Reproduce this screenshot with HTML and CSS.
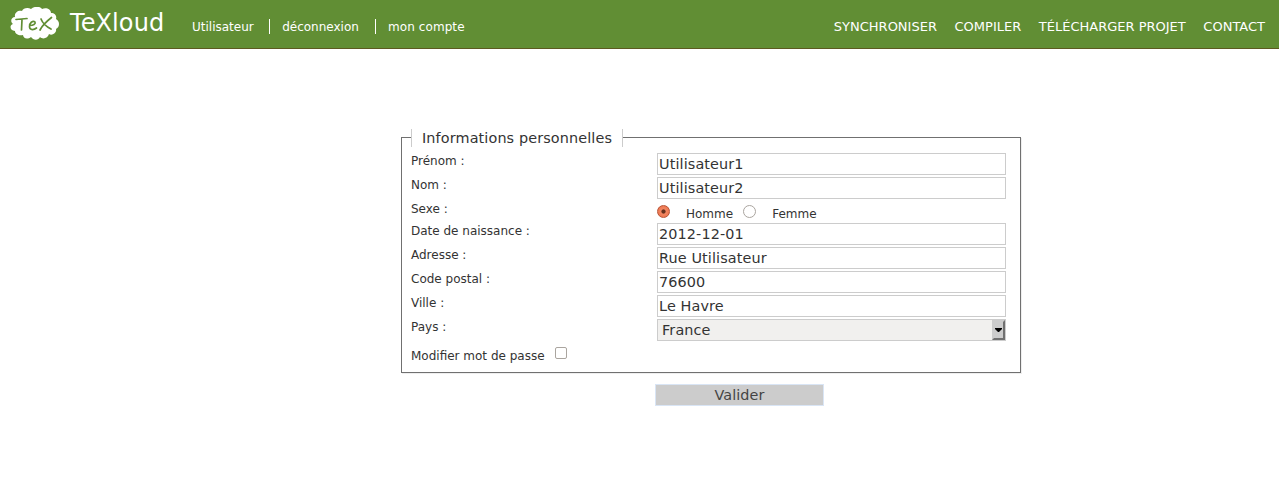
FILE: index.html
```html
<!DOCTYPE html>
<html lang="fr">
<head>
<meta charset="utf-8">
<title>TeXloud</title>
<link rel="stylesheet" href="styles.css">
</head>
<body>
<header class="topbar">
  <svg class="logo" width="50" height="34" viewBox="0 0 50 34">
    <path fill="#fff" d="M5 10C4 6 8 3 12 4C13 1 18 0 21 2C24-1 30-1 32 2C36 0 41 2 41 6C45 6 47 9 46 12C50 14 50 20 46 22C47 26 42 29 39 27C38 31 33 33 30 30C28 34 23 33 21 30C17 33 13 31 13 28C9 29 5 27 5 24C0 24-1 18 3 17C0 15 1 10 5 10Z"/>
    <path fill="none" stroke="#618e34" stroke-width="1.7" stroke-linecap="round" d="M6 12.500L17 11.500M12 12.500L11.500 23M20 18.500C23 18.500 26 17 25 15C23 13 19 16 19.500 20C20 23.500 24 23 26.500 21M31 12C33 17 37 20 41 22M41.500 10.500C37 14 32 19 30 23"/>
  </svg>
  <h1 class="brand">TeXloud</h1>
  <nav class="session">
    <a class="session-item">Utilisateur</a>
    <a class="session-item">déconnexion</a>
    <a class="session-item">mon compte</a>
  </nav>
  <nav class="menu">
    <a>SYNCHRONISER</a><a>COMPILER</a><a>TÉLÉCHARGER PROJET</a><a>CONTACT</a>
  </nav>
</header>
<form class="profile">
  <fieldset class="panel">
    <legend class="panel-title">Informations personnelles</legend>
    <div class="row"><label>Prénom :</label><input class="field" type="text" value="Utilisateur1"></div>
    <div class="row"><label>Nom :</label><input class="field" type="text" value="Utilisateur2"></div>
    <div class="row row-radio"><label>Sexe :</label>
      <div class="choices"><input class="radio" type="radio" name="sexe" checked><span class="choice">Homme</span><input class="radio" type="radio" name="sexe"><span class="choice">Femme</span></div>
    </div>
    <div class="row"><label>Date de naissance :</label><input class="field" type="text" value="2012-12-01"></div>
    <div class="row"><label>Adresse :</label><input class="field" type="text" value="Rue Utilisateur"></div>
    <div class="row"><label>Code postal :</label><input class="field" type="text" value="76600"></div>
    <div class="row"><label>Ville :</label><input class="field" type="text" value="Le Havre"></div>
    <div class="row"><label>Pays :</label>
      <div class="select"><span>France</span><span class="arrow"><svg width="7" height="4" viewBox="0 0 7 4"><path d="M0 0H7V1L4 4H3L0 1Z"/></svg></span></div>
    </div>
    <div class="password"><label>Modifier mot de passe</label><input class="check" type="checkbox"></div>
  </fieldset>
  <button class="submit" type="button">Valider</button>
</form>
</body>
</html>
```

FILE: styles.css
```css
* { box-sizing: border-box; }
body {
  margin: 0;
  background: #fff;
  color: #333;
  font: 12px/16px "DejaVu Sans", sans-serif;
}
.topbar {
  display: flex;
  height: 49px;
  padding: 0 14px 0 10px;
  background: #618e34;
  border-bottom: 1px solid #5d5a20;
  color: #fff;
}
.logo { margin-top: 7px; }
.brand {
  width: 94px;
  margin: 8px 0 0 10px;
  font-size: 24px;
  line-height: 30px;
  letter-spacing: 0.1px;
  font-weight: normal;
  white-space: nowrap;
}
.session { display: flex; margin: 19px 0 0 28px; height: 15px; }
.session-item { line-height: 16px; white-space: nowrap; }
.session-item + .session-item {
  margin-left: 15.4px;
  padding-left: 12px;
  border-left: 1px solid #fff;
}
.session-item:last-child { margin-left: 16.2px !important; letter-spacing: 0.08px; }
.menu {
  display: flex;
  gap: 17.6px;
  margin: 19px 0 0 auto;
  font-size: 13px;
  white-space: nowrap;
}
.profile { width: 620px; margin: 79px 0 0 401px; }
.panel {
  height: 245px;
  margin: 0;
  padding: 7px 14px 0 9px;
  border: 1px solid #707070;
  box-shadow: 1px 1px #eee;
}
.panel-title {
  height: 18px;
  padding: 0 10px;
  border: solid #ccc;
  border-width: 0 1px;
  font-size: 14.4px;
  line-height: 19px;
  letter-spacing: 0.12px;
  transform: translateY(1px);
}
.row {
  display: grid;
  grid-template-columns: 246px 349px;
  height: 24px;
}
.row-radio { height: 22px; }
.field, .select {
  width: 349px;
  height: 22px;
  margin: 0;
  padding: 0 1px;
  border: 1px solid #ccc;
  background: #fff;
  color: #333;
  font: 14.4px/20px "DejaVu Sans", sans-serif;
  letter-spacing: 0.12px;
}
.select {
  display: flex;
  justify-content: space-between;
  padding: 0 0 0 4px;
  background: #f1f0ee;
}
.arrow {
  display: flex;
  align-items: center;
  justify-content: center;
  width: 13px;
  height: 20px;
  background: #ccc;
  border: 2px solid;
  border-color: #ccc #707070 #707070 #ccc;
}
.choices { display: flex; }
.radio {
  appearance: none;
  width: 13px;
  height: 13px;
  margin: 4px 0 0;
  border: 1px solid #aaa59f;
  border-radius: 50%;
  background: #fff;
}
.radio:checked {
  border-color: #b85335;
  background: radial-gradient(circle, #66301d 0 1.7px, #f28662 2.5px, #ec764f 6px);
}
.choice { margin: 5px 10px 0 16px; }
.password { display: flex; margin-top: 3px; }
.password label { padding-top: 2px; }
.check {
  appearance: none;
  width: 12px;
  height: 12px;
  margin: 1px 0 0 10px;
  border: 1px solid #aaa59f;
  border-radius: 2px;
  background: #fff;
}
.submit {
  display: block;
  width: 169px;
  height: 22px;
  margin: 11px 0 0 254px;
  padding: 0;
  border: 1px solid #d9e5f5;
  background: #ccc;
  color: #444;
  font: 14.4px/20px "DejaVu Sans", sans-serif;
  letter-spacing: 0.1px;
}
```
